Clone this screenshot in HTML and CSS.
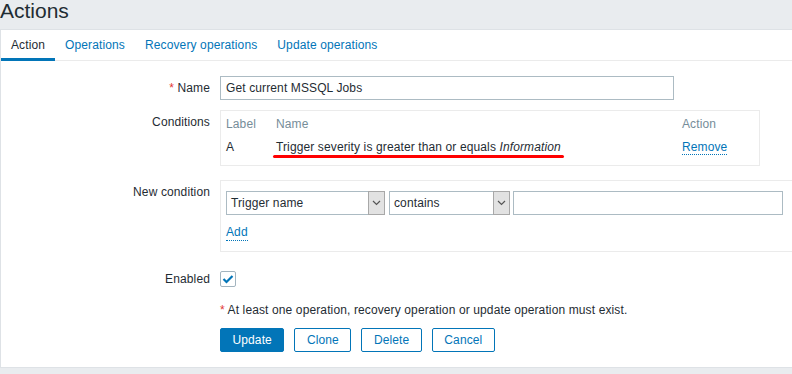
FILE: index.html
```html
<!DOCTYPE html>
<html lang="en">
<head>
  <meta charset="UTF-8" />
  <title>Actions</title>
  <link rel="stylesheet" href="styles.css">
</head>
<body>
  <header class="page-header">
    <h1>Actions</h1>
  </header>

  <main class="panel">
    <ul class="tabs">
      <li class="tab active">Action</li>
      <li class="tab">Operations</li>
      <li class="tab">Recovery operations</li>
      <li class="tab">Update operations</li>
    </ul>

    <form class="form-list">
      <div class="form-row row-name">
        <label class="form-label"><span class="req">*</span> Name</label>
        <div class="form-field">
          <input class="text-input name-input" type="text" value="Get current MSSQL Jobs" />
        </div>
      </div>

      <div class="form-row row-conditions">
        <label class="form-label">Conditions</label>
        <div class="form-field">
          <div class="conditions-box">
            <table class="conditions-table">
              <thead>
                <tr>
                  <th class="col-label">Label</th>
                  <th>Name</th>
                  <th class="col-action">Action</th>
                </tr>
              </thead>
              <tbody>
                <tr>
                  <td>A</td>
                  <td class="cond-name">Trigger severity is greater than or equals <em>Information</em><span class="marker"></span></td>
                  <td><a class="link" href="#">Remove</a></td>
                </tr>
              </tbody>
            </table>
          </div>
        </div>
      </div>

      <div class="form-row row-new">
        <label class="form-label">New condition</label>
        <div class="form-field">
          <div class="new-box">
            <div class="new-inputs">
              <div class="select select-type">
                <span class="select-value">Trigger name</span>
                <span class="select-btn">
                  <svg width="9" height="6" viewBox="0 0 9 6"><polyline points="1,1 4.5,4.5 8,1" fill="none" stroke="#555" stroke-width="1.2"/></svg>
                </span>
              </div>
              <div class="select select-op">
                <span class="select-value">contains</span>
                <span class="select-btn">
                  <svg width="9" height="6" viewBox="0 0 9 6"><polyline points="1,1 4.5,4.5 8,1" fill="none" stroke="#555" stroke-width="1.2"/></svg>
                </span>
              </div>
              <input class="text-input value-input" type="text" />
            </div>
            <a class="link add-link" href="#">Add</a>
          </div>
        </div>
      </div>

      <div class="form-row row-enabled">
        <label class="form-label">Enabled</label>
        <div class="form-field">
          <span class="checkbox">
            <svg width="12" height="10" viewBox="0 0 12 10"><polyline points="1.5,5 4.5,8 10.5,2" fill="none" stroke="#0275b8" stroke-width="2.2"/></svg>
          </span>
        </div>
      </div>

      <div class="form-row row-note">
        <div></div>
        <div class="form-field note"><span class="req">*</span> At least one operation, recovery operation or update operation must exist.</div>
      </div>

      <div class="form-row row-buttons">
        <div></div>
        <div class="form-field buttons">
          <button type="button" class="btn btn-main">Update</button>
          <button type="button" class="btn">Clone</button>
          <button type="button" class="btn">Delete</button>
          <button type="button" class="btn">Cancel</button>
        </div>
      </div>
    </form>
  </main>
</body>
</html>
```

FILE: styles.css
```css
body {
  margin: 0;
  background-color: #e9ecef;
  color: #1f2c33;
  font-family: 'Liberation Sans', Arial, sans-serif;
  font-size: 12px;
  letter-spacing: 0.12px;
  overflow: hidden;
}

.page-header {
  height: 29px;
}

.page-header h1 {
  margin: 0;
  font-size: 21px;
  line-height: 21px;
  font-weight: normal;
  letter-spacing: 0;
  color: #1f2c33;
}

.panel {
  display: block;
  background: white;
  border: 1px solid #dee2e6;
  border-right: none;
}

.tabs {
  display: flex;
  margin: 0;
  padding: 0;
  list-style: none;
  border-bottom: 1px solid #ebebeb;
}

.tab {
  padding: 0 10px;
  height: 28px;
  line-height: 31px;
  color: #0275b8;
  border-bottom: 3px solid transparent;
  margin-bottom: -1px;
}

.tab.active {
  color: #1f2c33;
  border-bottom-color: #0275b8;
}

.form-list {
  padding: 15px 0 15px;
}

.form-row {
  display: grid;
  grid-template-columns: 209px 1fr;
  column-gap: 10px;
}

.form-label {
  text-align: right;
  line-height: 24px;
}

.req {
  color: #e33734;
}

.text-input {
  box-sizing: border-box;
  height: 24px;
  padding: 0 5px;
  border: 1px solid #acbbc3;
  font-family: inherit;
  font-size: 12px;
  letter-spacing: 0.12px;
  color: #1f2c33;
  background: white;
  outline: none;
}

.name-input {
  width: 454px;
}

.row-conditions {
  margin-top: 10px;
}

.conditions-box {
  width: 540px;
  box-sizing: border-box;
  border: 1px solid #ebebeb;
  padding: 2px 5px 6px;
}

.conditions-table {
  width: 100%;
  border-collapse: collapse;
}

.conditions-table th,
.conditions-table td {
  padding: 4px 0;
  line-height: 15px;
  text-align: left;
  font-weight: normal;
}

.conditions-table th {
  color: #768d99;
}

.col-label {
  width: 50px;
}

.col-action {
  width: 72px;
}

.cond-name {
  position: relative;
}

/* red hand-drawn highlight */
.marker {
  position: absolute;
  left: -3px;
  top: 19px;
  width: 291px;
  height: 3px;
  border-radius: 2px;
  background: #ff0000;
}

.link {
  color: #0275b8;
  text-decoration: none;
  border-bottom: 1px dotted #0275b8;
}

.row-new {
  margin-top: 14px;
}

.new-box {
  border: 1px solid #ebebeb;
  border-right: none;
  padding: 10px 5px 10px;
}

.new-inputs {
  display: flex;
  gap: 4px;
}

.select {
  box-sizing: border-box;
  display: flex;
  height: 24px;
  border: 1px solid #acbbc3;
  background: white;
}

.select-type {
  width: 159px;
}

.select-op {
  width: 121px;
}

.select-value {
  flex: 1;
  padding-left: 4px;
  line-height: 22px;
}

.select-btn {
  display: flex;
  align-items: center;
  justify-content: center;
  width: 15px;
  margin: -1px -1px -1px 0;
  border: 1px solid #a8a8a8;
  background: #e2e2e2;
}

.value-input {
  width: 270px;
  margin-left: -1px;
}

.add-link {
  display: inline-block;
  margin-top: 10px;
  line-height: 15px;
}

.row-enabled {
  margin-top: 15px;
}

.row-enabled .form-field {
  display: flex;
  align-items: center;
}

.checkbox {
  box-sizing: border-box;
  display: flex;
  align-items: center;
  justify-content: center;
  width: 16px;
  height: 16px;
  border: 1px solid #a2b4bf;
  border-radius: 2px;
}

.row-note {
  margin-top: 11px;
}

.note {
  line-height: 16px;
}

.row-buttons {
  margin-top: 10px;
}

.buttons {
  display: flex;
  gap: 10px;
}

.btn {
  height: 24px;
  padding: 0 11.5px;
  border: 1px solid #0275b8;
  border-radius: 2px;
  background: white;
  color: #0275b8;
  font-family: inherit;
  font-size: 12px;
  letter-spacing: 0.12px;
}

.btn-main {
  background: #0275b8;
  color: white;
}
```
